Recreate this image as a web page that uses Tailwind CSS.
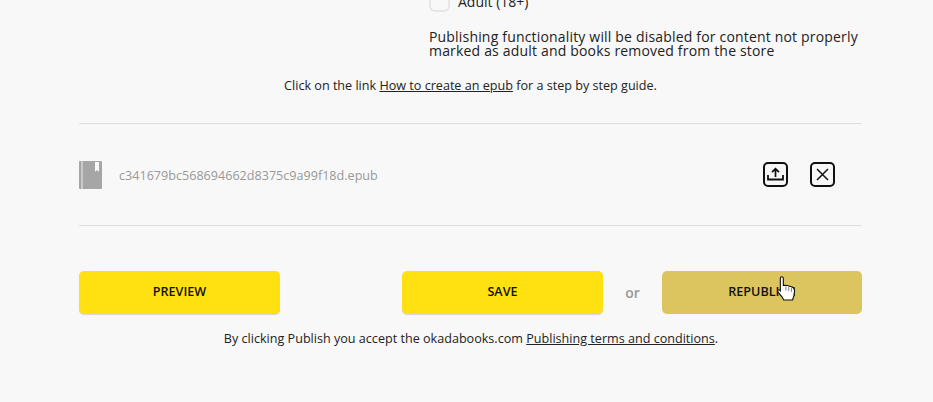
<!DOCTYPE html>
<html>
<head>
<meta charset="utf-8">
<script src="https://cdn.jsdelivr.net/npm/@tailwindcss/browser@4"></script>
</head>
<body class="bg-[#f8f8f8] font-['Open_Sans',sans-serif] text-[#222] overflow-hidden">
<div class="relative w-[933px] h-[402px] overflow-hidden">
  <div class="w-[783px] ml-[79px] -mt-[9px]">
    <div class="ml-[350px] w-[433px]">
      <div class="flex items-center gap-[8px] h-[21px]">
        <span class="w-[21px] h-[21px] rounded-[6px] bg-[#f8f8f8] border-2 border-[#e6e6e6]"></span>
        <span class="text-[14px] leading-[20px]">Adult (18+)</span>
      </div>
      <p class="mt-[18px] text-[14px] leading-[14px] tracking-[0.18px] whitespace-nowrap">Publishing functionality will be disabled for content not properly<br>marked as adult and books removed from the store</p>
    </div>
    <p class="mt-[19px] text-center text-[12.6px] leading-[18px]">Click on the link <a class="underline">How to create an epub</a> for a step by step guide.</p>
    <div class="mt-[28px] border-t border-[#dfdfdf] h-[103px] border-b flex items-center">
      <svg class="w-[23px] h-[28px] shrink-0" viewBox="0 0 23 28">
        <rect width="23" height="28" rx="1" fill="#a6a6a6"/>
        <rect x="2" width="2" height="28" fill="#c9c9c9"/>
        <path d="M16 1h4v10l-2-2-2 2z" fill="#f8f8f8"/>
      </svg>
      <span class="ml-[17px] pt-[4px] text-[12.6px] text-[#999]">c341679bc568694662d8375c9a99f18d.epub</span>
      <button class="ml-auto w-[25px] h-[25px] border-2 border-[#111] rounded-[5px] flex items-center justify-center">
        <svg class="w-[17px] h-[17px]" viewBox="0 0 17 17" fill="none" stroke="#111" stroke-width="1.7">
          <path d="M8.5 11V3M5 6.2 8.5 2.8 12 6.2"/>
          <path d="M1 9v4.5h15V9" stroke-width="1.8"/>
        </svg>
      </button>
      <button class="ml-[22px] mr-[27px] w-[25px] h-[25px] border-2 border-[#111] rounded-[5px] flex items-center justify-center">
        <svg class="w-[13px] h-[13px]" viewBox="0 0 13 13" fill="none" stroke="#111" stroke-width="1.5">
          <path d="M1 1l11 11M12 1 1 12"/>
        </svg>
      </button>
    </div>
    <div class="mt-[45px] flex items-center">
      <button class="w-[201px] h-[43px] rounded-[5px] bg-[#ffe011] shadow-[0_1px_1px_rgba(0,0,0,0.15)] text-[12.6px] font-semibold text-[#111]">PREVIEW</button>
      <button class="ml-[122px] w-[201px] h-[43px] rounded-[5px] bg-[#ffe011] shadow-[0_1px_1px_rgba(0,0,0,0.15)] text-[12.6px] font-semibold text-[#111]">SAVE</button>
      <span class="w-[59px] text-center text-[14px] font-semibold text-[#999]">or</span>
      <button class="w-[200px] h-[43px] rounded-[5px] bg-[#dcc55f] text-[12.6px] font-semibold text-[#111]">REPUBLISH</button>
    </div>
    <p class="mt-[16px] ml-[1px] text-center text-[12.6px] leading-[18px]">By clicking Publish you accept the okadabooks.com <a class="underline">Publishing terms and conditions</a>.</p>
  </div>
  <svg class="absolute left-[777px] top-[276px] w-[20px] h-[25px]" viewBox="0 0 18 24" preserveAspectRatio="none">
    <path d="M3.5 1C4.6 0.4 5.6 1 5.7 2.2V9.2L7 8.9 9.3 9.2 11.5 9.8 13.8 10.6 15.3 12 15.8 14.5 15.3 18.5 14 23H6L4.8 20.5 1 15.5C.2 14 .9 13 2.4 13.5L3 14.2V2.5C3 1.8 3.1 1.3 3.5 1Z" fill="#fff" stroke="#111" stroke-width="1"/>
    <path d="M8 10v4M10.6 10.5v4M13 11.2v4" stroke="#555" stroke-width="0.7" fill="none"/>
  </svg>
</div>
</body>
</html>
